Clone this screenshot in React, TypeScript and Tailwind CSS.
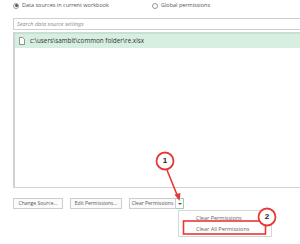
function Radio({ checked }: { checked?: boolean }) {
  return (
    <span className="flex h-[6px] w-[6px] items-center justify-center rounded-full border border-[#9a9a9a] bg-white">
      {checked && <span className="h-[3px] w-[3px] rounded-full bg-[#555]" />}
    </span>
  );
}

function Button({ label, w }: { label: string; w: string }) {
  return (
    <div
      className={`flex h-[11px] items-center justify-center whitespace-nowrap border border-[#cdcdcd] bg-[#fbfbfb] text-[5px] text-[#555] ${w}`}
    >
      {label}
    </div>
  );
}

export default function App() {
  return (
    <div className="relative h-[244px] w-[300px] overflow-hidden bg-white font-['Open_Sans',sans-serif] text-[#555]">
      {/* scope radios */}
      <div className="flex h-[11px] items-center gap-[43px] pl-[13px] text-[5.5px]">
        <label className="flex items-center gap-[3px] whitespace-nowrap">
          <Radio checked />
          Data sources in current workbook
        </label>
        <label className="flex items-center gap-[3px] whitespace-nowrap">
          <Radio />
          Global permissions
        </label>
      </div>

      {/* search */}
      <div className="ml-[13px] mt-[7px] flex h-[12px] items-center border border-r-0 border-[#cfcfcf] pl-[3px] text-[5.5px] italic text-[#8a8a8a]">
        Search data source settings
      </div>

      {/* list */}
      <div className="ml-[13px] mt-[2px] h-[156px] border-b border-l-2 border-[#d2d2d2]">
        <div className="flex h-[16px] items-center gap-[5px] border-t-2 border-[#c9dfd1] bg-[#d6efe1] pl-[4px] text-[6.3px] text-[#333]">
          <svg width="6" height="8" viewBox="0 0 6 8" className="shrink-0">
            <path d="M0.5 0.5h3.2l1.8 1.8v5.2h-5z" fill="white" stroke="#666" strokeWidth="0.7" />
          </svg>
          c:\users\sambit\common folder\re.xlsx
        </div>
      </div>

      {/* buttons */}
      <div className="ml-[13px] mt-[10px] flex items-center gap-[7px]">
        <Button label="Change Source..." w="w-[50px]" />
        <Button label="Edit Permissions..." w="w-[52px]" />
        <div className="flex items-center">
          <Button label="Clear Permissions" w="w-[47px]" />
          <div className="flex h-[11px] w-[8px] items-center justify-center border border-l-0 border-[#9fcfb1] bg-white">
            <span className="border-x-[2px] border-t-[2.5px] border-x-transparent border-t-[#555]" />
          </div>
        </div>
      </div>

      {/* dropdown menu */}
      <div className="absolute left-[178px] top-[210px] flex h-[27px] w-[94px] flex-col border border-[#d6d6d6] bg-white pl-[17px] text-[5.5px] text-[#666]">
        <div className="mt-[2px] h-[11px] whitespace-nowrap leading-[11px]">Clear Permissions</div>
        <div className="h-[11px] whitespace-nowrap leading-[11px]">Clear All Permissions</div>
      </div>

      {/* annotations */}
      <svg className="absolute inset-0" width="300" height="244" viewBox="0 0 300 244">
        <rect x="183.5" y="221" width="82" height="13" fill="none" stroke="#e53935" strokeWidth="1.6" />
        <line x1="167" y1="170" x2="177.5" y2="196" stroke="#e53935" strokeWidth="1.6" />
        <path d="M174.5 194.5 L179.5 201 L180.5 193 Z" fill="#e53935" />
        <circle cx="165" cy="161" r="8.5" fill="white" stroke="#e53935" strokeWidth="1.8" />
        <circle cx="267" cy="217" r="8.5" fill="white" stroke="#e53935" strokeWidth="1.8" />
      </svg>
      <div className="absolute left-[157px] top-[153px] flex h-[16px] w-[16px] items-center justify-center font-['Liberation_Sans',sans-serif] text-[8px] font-bold text-[#222]">
        1
      </div>
      <div className="absolute left-[259px] top-[209px] flex h-[16px] w-[16px] items-center justify-center font-['Liberation_Sans',sans-serif] text-[8px] font-bold text-[#222]">
        2
      </div>
    </div>
  );
}
